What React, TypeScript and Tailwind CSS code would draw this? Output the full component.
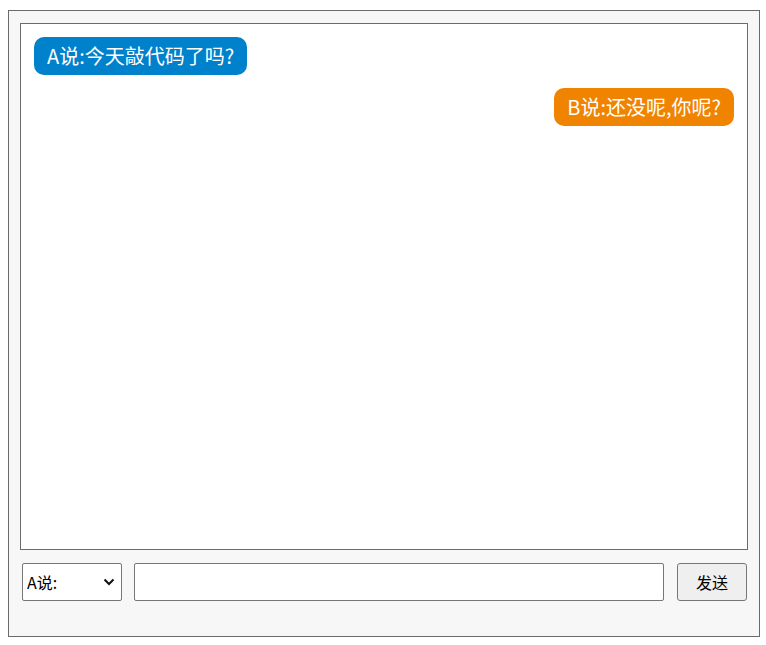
import React from "react";

export default function App() {
  const font = { fontFamily: '"Noto Sans CJK SC", "Noto Sans", sans-serif' };
  return (
    <div className="w-[766px] h-[645px] bg-white pt-[10px] pl-[8px]" style={font}>
      <div className="w-[752px] h-[627px] border border-[#6b6b6b] bg-[#f7f7f7] pt-[12px] pl-[11px] pr-[11px] flex flex-col">
        <div className="w-[728px] h-[527px] border border-[#6b6b6b] bg-white p-[13px] flex flex-col gap-[13px]">
          <div className="self-start h-[38px] px-[13px] rounded-[10px] bg-[#0081cc] text-white text-[20px] flex items-center">
            A说:今天敲代码了吗?
          </div>
          <div className="self-end h-[38px] px-[13px] rounded-[10px] bg-[#f08300] text-white text-[20px] flex items-center">
            B说:还没呢,你呢?
          </div>
        </div>
        <div className="mt-[13px] flex items-center pl-[2px]">
          <div className="relative w-[100px] h-[38px]">
            <select className="appearance-none w-full h-full border border-[#767676] rounded-[2px] bg-white text-[16px] text-black pl-[4px] outline-none" defaultValue="A">
              <option value="A">A说:</option>
              <option value="B">B说:</option>
            </select>
            <svg className="absolute right-[7px] top-[15px] pointer-events-none" width="12" height="8" viewBox="0 0 12 8">
              <path d="M1.5 1.5 L6 6 L10.5 1.5" fill="none" stroke="#111" strokeWidth="2" />
            </svg>
          </div>
          <input className="ml-[12px] w-[530px] h-[38px] border border-[#767676] rounded-[2px] bg-white outline-none px-2" />
          <button className="ml-[13px] w-[70px] h-[38px] border border-[#767676] rounded-[3px] bg-[#efefef] text-[16px] text-black">
            发送
          </button>
        </div>
      </div>
    </div>
  );
}
